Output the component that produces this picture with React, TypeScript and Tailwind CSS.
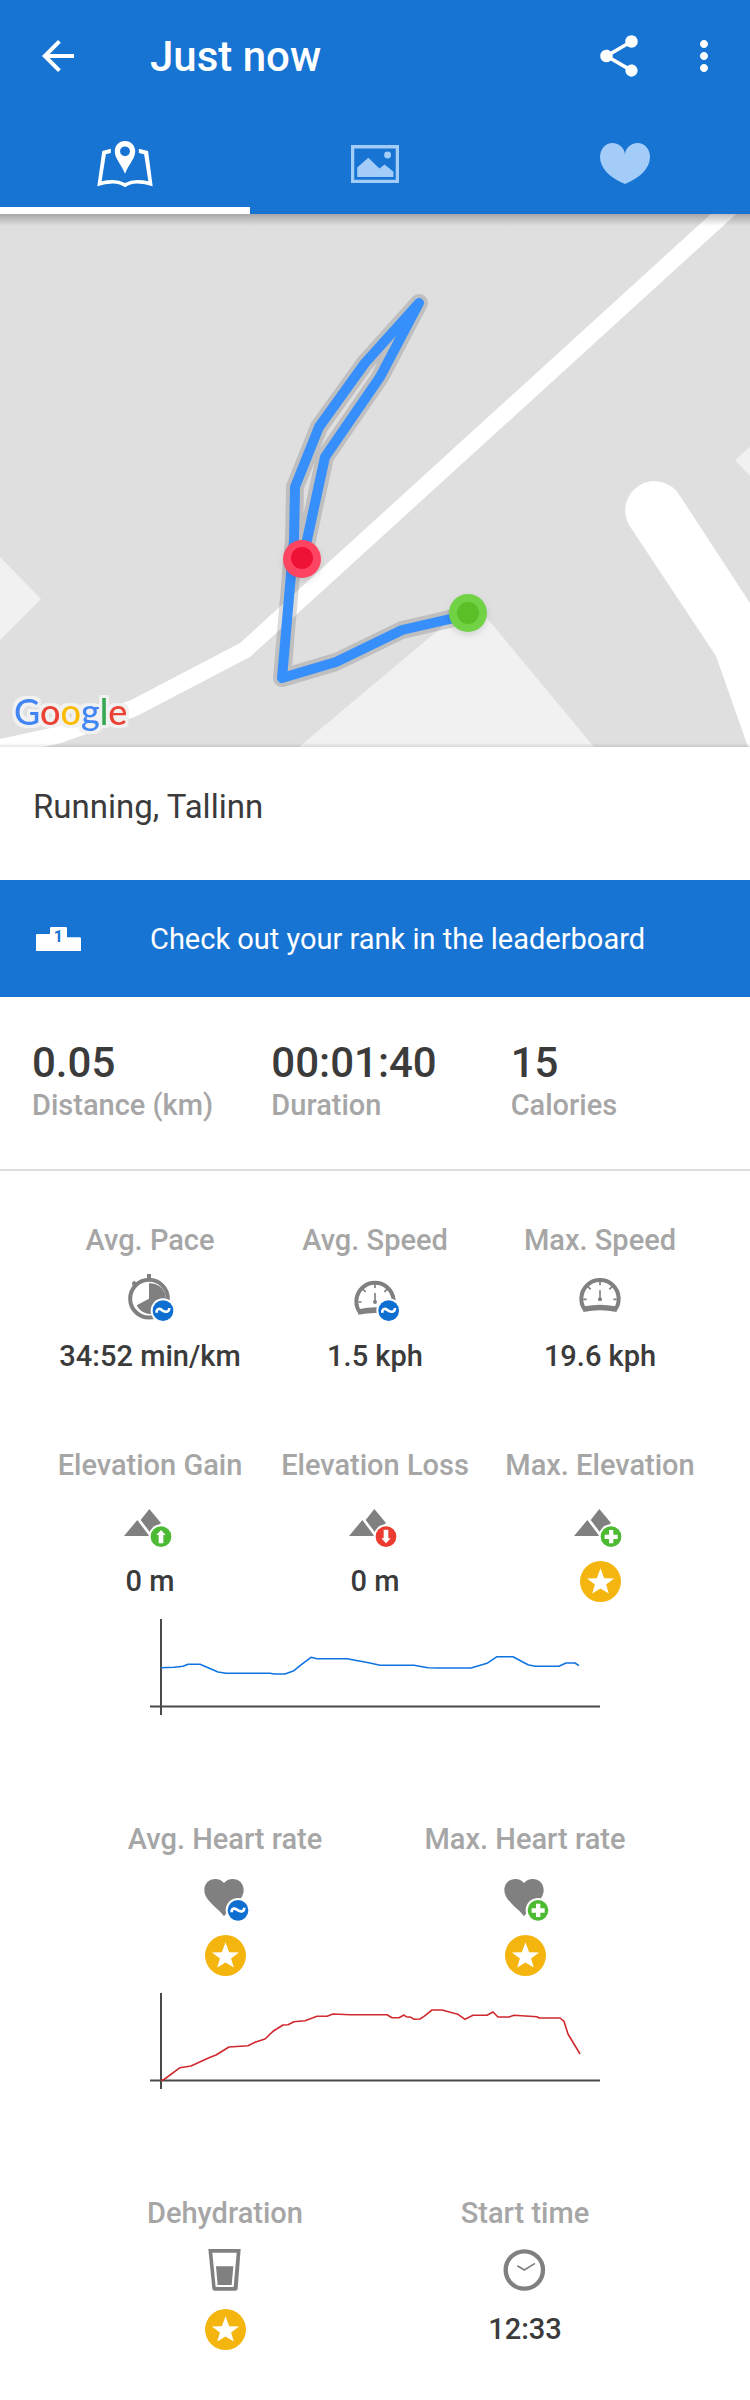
import type { ReactNode } from "react";
import { MdArrowBack, MdMoreVert, MdShare } from "react-icons/md";

const GREY = "#808080";

/* ---------- tab icons ---------- */

function MapTabIcon() {
  return (
    <svg viewBox="20 29 170 143" className="h-12 w-14" fill="#fff" aria-hidden="true">
      <path d="M62 54 36 61 21 168Q45 160 68 160 90 161 105 171 120 161 142 160 165 160 189 168L175 61 147 54V67L163 71 176 153Q160 149 143 149 122 149 105 158 88 149 68 149 50 149 34 153L47 71 62 67Z" />
      <path
        fillRule="evenodd"
        d="M105 31C87 31 74 45 74 62 74 84 93 100 105 130 117 100 136 84 136 62 136 45 123 31 105 31ZM105 47A15 15 0 1 1 105 77 15 15 0 1 1 105 47Z"
      />
    </svg>
  );
}

function PhotoTabIcon() {
  return (
    <svg viewBox="781 42 147 117" className="h-10 w-12" fill="#a3cdf8" aria-hidden="true">
      <path fillRule="evenodd" d="M781 42H928V159H781ZM791 53V149H918V53Z" />
      <circle cx="893" cy="73" r="10.5" />
      <path d="M800 140V111L834 81 868 114 884 102 911 124V140Z" />
    </svg>
  );
}

function HeartTabIcon() {
  return (
    <svg viewBox="0 0 50 42" className="h-[42px] w-[50px]" fill="#a3cdf8" aria-hidden="true">
      <path d="M25 12C25 5 19 0 12.5 0 5.500 0 0 6 0 14 0 25 10 35 25 41 40 35 50 25 50 14 50 6 44.500 0 37.500 0 31 0 25 5 25 12Z" />
    </svg>
  );
}

/* ---------- metric icons, 144 units wide, centred on x = 0 ---------- */

type BadgeKind = "average" | "plus" | "up" | "down";

const badgeColor: Record<BadgeKind, string> = {
  average: "#0f6fd1",
  plus: "#4cbb33",
  up: "#4cbb33",
  down: "#ec3b30",
};

function Badge({ kind, x, y }: { kind: BadgeKind; x: number; y: number }) {
  return (
    <g transform={`translate(${x} ${y})`}>
      <circle r="37" fill="#fff" />
      <circle r="31" fill={badgeColor[kind]} />
      {kind === "average" && (
        <path
          d="M-19 6V1C-17-6-11-7-5-3 2 3 8 5 14 2 18 0 19-3 19-8"
          fill="none"
          stroke="#fff"
          strokeWidth="8"
        />
      )}
      {kind === "plus" && <path d="M-6-20H7V-6H20V7H7V20H-6V7H-19V-6H-6Z" fill="#fff" />}
      {kind === "up" && <path d="M0-20 14-5H7V20H-7V-5H-14Z" fill="#fff" />}
      {kind === "down" && <path d="M0 20 14 5H7V-21H-7V5H-14Z" fill="#fff" />}
    </g>
  );
}

function MetricSvg({ top, children }: { top: number; children: ReactNode }) {
  return (
    <svg viewBox={`-72 ${top} 144 144`} className="size-12 overflow-visible" fill={GREY} aria-hidden="true">
      {children}
    </svg>
  );
}

function PaceIcon() {
  return (
    <MetricSvg top={42}>
      <circle cx="-3" cy="116" r="56.5" fill="none" stroke={GREY} strokeWidth="12" />
      <path d="M-9 42H3V58H-9Z" />
      <path d="M-54 68-48 62-38 70-46 80-53 76Z" />
      <path d="M-3 116V70A46 46 0 1 1-40 136Z" />
      <Badge kind="average" x={39} y={152} />
    </MetricSvg>
  );
}

function Gauge() {
  return (
    <>
      <path d="M-44 151A56 56 0 1 1 44 151" fill="none" stroke={GREY} strokeWidth="12" />
      <path d="M-50 156-46 139Q0 129 46 139L50 156Q0 146-50 156Z" />
      <path
        d="M-50 118H-40M50 118H40M0 64V76M-36 80-28 88M36 80 28 88M0 91V118"
        stroke={GREY}
        strokeWidth="5"
      />
      <circle cx="0" cy="118" r="6" />
    </>
  );
}

function AvgSpeedIcon() {
  return (
    <MetricSvg top={42}>
      <g transform="translate(0 8)">
        <Gauge />
      </g>
      <Badge kind="average" x={41} y={152} />
    </MetricSvg>
  );
}

function MaxSpeedIcon() {
  return (
    <MetricSvg top={42}>
      <Gauge />
    </MetricSvg>
  );
}

function ElevationIcon({ kind }: { kind: BadgeKind }) {
  return (
    <MetricSvg top={-18}>
      <path d="M-2 12-28 45 0 82 33 54Z" />
      <path d="M-38 45-2 93H-78Z" />
      <Badge kind={kind} x={33} y={95} />
    </MetricSvg>
  );
}

function HeartRateIcon({ kind }: { kind: BadgeKind }) {
  return (
    <MetricSvg top={216}>
      <path d="M-3 246C-10 238-18 234-29 234-48 234-62 248-62 267-62 286-50 298-34 314-21 326-9 336-3 346 3 336 15 326 28 314 44 298 56 286 56 267 56 248 42 234 23 234 12 234 4 238-3 246Z" />
      <Badge kind={kind} x={39} y={328} />
    </MetricSvg>
  );
}

function GlassIcon() {
  return (
    <MetricSvg top={201}>
      <path
        fillRule="evenodd"
        d="M-50 207H47L38 326Q37 332 31 332H-31Q-37 332-38 326ZM-38 218-28 321H26L35 218Z"
      />
      <path d="M-27 259H25L20 315H-22Z" />
    </MetricSvg>
  );
}

function ClockIcon() {
  return (
    <MetricSvg top={201}>
      <circle cx="-2" cy="270" r="56" fill="none" stroke={GREY} strokeWidth="13" />
      <path d="M-23 257-2 270 30 250" fill="none" stroke={GREY} strokeWidth="5" />
    </MetricSvg>
  );
}

function PremiumStar() {
  return (
    <svg viewBox="-62 -62 124 124" className="size-[41px]" role="img" aria-label="Premium">
      <circle r="62" fill="#f5b50f" />
      <path
        d="M0-40 11-10 41-9 17 9 25 36 0 21-25 36-17 9-41-9-11-10Z"
        fill="#fff"
      />
    </svg>
  );
}

/* ---------- blocks ---------- */

function RouteMap() {
  const route =
    "467,399 450,405 402,416 336,448 282,464 294,326 295,273 319,213 365,149 419,89 380,163 325,243 307,326 302,344";
  return (
    <section aria-label="Route map" className="relative h-[533px] overflow-hidden bg-[#dfdfdf]">
      <svg viewBox="0 0 750 533" preserveAspectRatio="xMidYMid slice" className="size-full">
        <path d="M0 343 41 385 0 426Z" fill="#f1f1f1" />
        <path d="M750 233 735 246 750 262Z" fill="#f1f1f1" />
        <path d="M299 533 473 387 594 533Z" fill="#f1f1f1" />
        <path d="M-10 536 58 521 134 494 245 436 740-15" fill="none" stroke="#fff" strokeWidth="17" />
        <path d="M629 311A29 29 0 1 1 680 282L750 389V533H748L716 442Z" fill="#fff" />
        <polyline points={route} fill="none" stroke="#000" strokeOpacity="0.14" strokeWidth="18" strokeLinejoin="round" />
        <polyline points={route} fill="none" stroke="#378ffc" strokeWidth="10" strokeLinejoin="round" />
        <g className="drop-shadow-md">
          <circle cx="302" cy="345" r="19" fill="#ff4462" />
          <circle cx="468" cy="399" r="19" fill="#72d245" />
        </g>
        <circle cx="302" cy="344" r="11" fill="#ef1136" />
        <circle cx="468" cy="399" r="11" fill="#5bbf27" />
      </svg>
      <div className="absolute bottom-3 left-3.5 font-['Lato'] text-[36px] leading-12 font-medium [filter:drop-shadow(3px_0_0_#f1f1f1)_drop-shadow(-3px_0_0_#f1f1f1)_drop-shadow(0_3px_0_#f1f1f1)_drop-shadow(0_-3px_0_#f1f1f1)]">
        <span className="text-[#4285f4]">G</span>
        <span className="text-[#ea4335]">o</span>
        <span className="text-[#fbbc05]">o</span>
        <span className="text-[#4285f4]">g</span>
        <span className="text-[#34a853]">l</span>
        <span className="text-[#ea4335]">e</span>
      </div>
      <div className="absolute inset-x-0 top-0 h-3 bg-linear-to-b from-black/25 to-transparent" />
      <div className="absolute inset-x-0 bottom-0 h-1 bg-linear-to-t from-black/10 to-transparent" />
    </section>
  );
}

function Stat({ value, label }: { value: string; label: string }) {
  return (
    <div className="flex flex-col font-medium">
      <dd className="order-1 text-[42px] leading-12 text-[#3b3b3b]">{value}</dd>
      <dt className="order-2 text-[29px] leading-9 text-[#a6a6a6]">{label}</dt>
    </div>
  );
}

function Metric({ label, icon, value }: { label: string; icon: ReactNode; value?: string }) {
  return (
    <div className="flex flex-col items-center font-medium whitespace-nowrap">
      <h3 className="mb-4 text-[29px] leading-9 text-[#a6a6a6]">{label}</h3>
      {icon}
      <div className="mt-3.5 mb-0.5 flex h-10 items-center text-[29px] leading-10 text-[#3b3b3b]">
        {value ?? <PremiumStar />}
      </div>
    </div>
  );
}

function LineChart({ label, points, color }: { label: string; points: string; color: string }) {
  return (
    <svg viewBox="0 0 450 96" className="mx-auto mt-4 w-3/5" role="img" aria-label={label} fill="none">
      <path d="M11 0V96M0 87.5H450" stroke="#4a4a4a" strokeWidth="2" />
      <polyline points={points} stroke={color} strokeWidth="1.6" strokeLinejoin="round" />
    </svg>
  );
}

const elevationPoints =
  "11,48.7 24,48.3 33,47.3 38,45.3 50,45.3 57,48.3 68,53 76,54.3 120,54.3 124,55 135,55 144,51.7 150,46.7 161,38.3 167,39.7 197,39.7 220,44 230,46.3 264,46.3 278,48.7 289,49 321,49 337,44.3 347,37.7 363,37.7 378,45.7 385,47.3 409,47.3 416,44 425,44 429,46.7";

const heartPoints =
  "11,87.5 14,86.5 30,74.7 41,73 59,64.7 66,62 79,54 98,52.7 105,49.3 115,46 123,38.3 133,32 138,31.7 144,28.7 155,27.7 167,23.3 177,23.3 183,21 200,21.7 237,21.7 242,24.7 249,24.7 254,22 256,23.7 261,24.3 264,26.3 270,26 274,23.3 282,17 292,17 304,20.3 308,21.3 315,26.3 323,22.3 337,22.3 343,19 348,24 359,24 364,22.3 387,23.7 389,25 410,25 414,28.3 418,41 421,46 430,61";

export default function App() {
  return (
    <main className="min-h-screen bg-white font-['Roboto',sans-serif]">
      <header className="bg-[#1774d3] text-white">
        <div className="flex h-28 items-center pr-[22px] pl-[34px]">
          <button type="button" aria-label="Back" className="size-12">
            <MdArrowBack className="size-12" />
          </button>
          <h1 className="grow pt-0.5 pl-[68px] text-[42px] leading-12 font-medium">Just now</h1>
          <button type="button" aria-label="Share" className="mr-9 size-[50px]">
            <MdShare className="size-[50px]" />
          </button>
          <button type="button" aria-label="More options" className="size-12">
            <MdMoreVert className="size-12" />
          </button>
        </div>
        <div role="tablist" className="grid h-[102px] grid-cols-3">
          <button type="button" role="tab" aria-selected="true" aria-label="Map" className="flex items-center justify-center border-b-7 border-white pt-2">
            <MapTabIcon />
          </button>
          <button type="button" role="tab" aria-selected="false" aria-label="Photos" className="flex items-center justify-center border-b-7 border-transparent pt-2">
            <PhotoTabIcon />
          </button>
          <button type="button" role="tab" aria-selected="false" aria-label="Heart rate" className="flex items-center justify-center border-b-7 border-transparent pt-2">
            <HeartTabIcon />
          </button>
        </div>
      </header>

      <RouteMap />

      <h2 className="px-[33px] pt-10 pb-[53px] text-[33px] leading-10 text-[#3b3b3b]">Running, Tallinn</h2>

      <a href="#leaderboard" className="flex h-[117px] items-center bg-[#1774d3] pl-9 text-white">
        <svg viewBox="0 0 135 72" className="h-6 w-[45px]" aria-hidden="true">
          <path d="M4 21H42V4Q42 0 46 0H89Q93 0 93 4V31H131Q135 31 135 35V72H0V25Q0 21 4 21Z" fill="#fff" />
          <text x="67" y="45" textAnchor="middle" fontSize="48" fontWeight="700" fill="#1774d3">
            1
          </text>
        </svg>
        <span className="pl-[69px] text-[29px] leading-9">Check out your rank in the leaderboard</span>
      </a>

      <dl className="grid grid-cols-3 border-b-2 border-[#dedede] pt-[42px] pb-[46px] pl-8">
        <Stat value="0.05" label="Distance (km)" />
        <Stat value="00:01:40" label="Duration" />
        <Stat value="15" label="Calories" />
      </dl>

      <div className="flex flex-col gap-[106px] pt-[51px] pb-[46px]">
        <section aria-label="Speed and elevation">
          <div className="grid grid-cols-3 gap-y-[69px] px-[5%]">
            <Metric label="Avg. Pace" icon={<PaceIcon />} value="34:52 min/km" />
            <Metric label="Avg. Speed" icon={<AvgSpeedIcon />} value="1.5 kph" />
            <Metric label="Max. Speed" icon={<MaxSpeedIcon />} value="19.6 kph" />
            <Metric label="Elevation Gain" icon={<ElevationIcon kind="up" />} value="0 m" />
            <Metric label="Elevation Loss" icon={<ElevationIcon kind="down" />} value="0 m" />
            <Metric label="Max. Elevation" icon={<ElevationIcon kind="plus" />} />
          </div>
          <LineChart label="Elevation over time" points={elevationPoints} color="#0f74e0" />
        </section>

        <section aria-label="Heart rate">
          <div className="grid grid-cols-2 px-[10%]">
            <Metric label="Avg. Heart rate" icon={<HeartRateIcon kind="average" />} />
            <Metric label="Max. Heart rate" icon={<HeartRateIcon kind="plus" />} />
          </div>
          <LineChart label="Heart rate over time" points={heartPoints} color="#d0292f" />
        </section>

        <section aria-label="Session" className="grid grid-cols-2 px-[10%]">
          <Metric label="Dehydration" icon={<GlassIcon />} />
          <Metric label="Start time" icon={<ClockIcon />} value="12:33" />
        </section>
      </div>
    </main>
  );
}
